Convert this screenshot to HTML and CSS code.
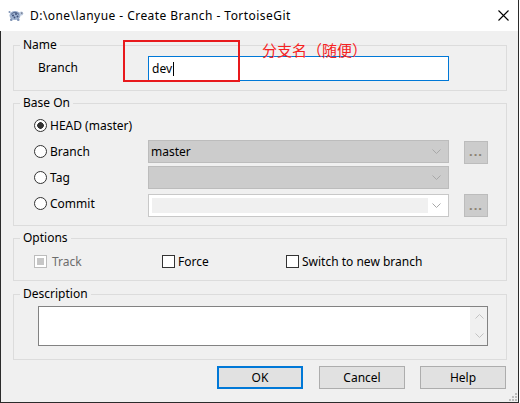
FILE: index.html
```html
<!DOCTYPE html>
<html lang="en">
<head>
<meta charset="utf-8">
<title>Create Branch - TortoiseGit</title>
<link rel="stylesheet" href="styles.css">
</head>
<body>
<div class="window">
  <div class="titlebar">
    <svg class="app-icon" width="16" height="14" viewBox="0 0 16 14">
      <ellipse cx="7" cy="7.5" rx="5.5" ry="4.5" fill="#9fb3d1"/>
      <path d="M3 6.5 Q7 2 11 6.5" fill="none" stroke="#55688e" stroke-width="1"/>
      <circle cx="5" cy="7.5" r="1" fill="#3f5078"/>
      <circle cx="8" cy="6" r="1" fill="#3f5078"/>
      <circle cx="9.5" cy="8.5" r="1" fill="#3f5078"/>
      <circle cx="6.5" cy="9.5" r="0.9" fill="#3f5078"/>
      <circle cx="13.3" cy="5.5" r="2" fill="#b9c7dc"/>
      <circle cx="13.8" cy="5" r="0.6" fill="#223"/>
      <rect x="2" y="10.5" width="2.5" height="2.5" rx="1" fill="#7f93b5"/>
      <rect x="9" y="10.5" width="2.5" height="2.5" rx="1" fill="#7f93b5"/>
      <rect x="0.5" y="3" width="2" height="2" rx="1" fill="#7f93b5"/>
    </svg>
    <span class="title">D:\one\lanyue - Create Branch - TortoiseGit</span>
    <svg class="close" width="11" height="11" viewBox="0 0 11 11">
      <path d="M0.5 0.5 L10.5 10.5 M10.5 0.5 L0.5 10.5" stroke="#000" stroke-width="1.1" fill="none"/>
    </svg>
  </div>

  <div class="client">
    <fieldset class="group g-name">
      <legend>Name</legend>
      <div class="name-row">
        <span class="lbl">Branch</span>
        <div class="edit focused"><span>dev</span><i class="caret"></i></div>
      </div>
    </fieldset>

    <fieldset class="group g-base">
      <legend>Base On</legend>
      <div class="base-grid">
        <span class="radio checked"><i class="rb"></i>HEAD (master)</span>
        <span></span>
        <span></span>

        <span class="radio"><i class="rb"></i>Branch</span>
        <div class="combo disabled"><span>master</span><svg class="chev" width="9" height="5" viewBox="0 0 9 5"><path d="M0.5 0.5 L4.5 4.5 L8.5 0.5" fill="none" stroke="#a8a8a8"/></svg></div>
        <span class="more m-first">...</span>

        <span class="radio"><i class="rb"></i>Tag</span>
        <div class="combo disabled"><span></span><svg class="chev" width="9" height="5" viewBox="0 0 9 5"><path d="M0.5 0.5 L4.5 4.5 L8.5 0.5" fill="none" stroke="#a8a8a8"/></svg></div>
        <span></span>

        <span class="radio r-last"><i class="rb"></i>Commit</span>
        <div class="combo white r-last-end"><span class="inner"></span><svg class="chev" width="9" height="5" viewBox="0 0 9 5"><path d="M0.5 0.5 L4.5 4.5 L8.5 0.5" fill="none" stroke="#a8a8a8"/></svg></div>
        <span class="more r-last-end">...</span>
      </div>
    </fieldset>

    <fieldset class="group g-options">
      <legend>Options</legend>
      <div class="opt-row">
        <span class="check disabled"><i class="cb"></i>Track</span>
        <span class="check"><i class="cb"></i>Force</span>
        <span class="check"><i class="cb"></i>Switch to new branch</span>
      </div>
    </fieldset>

    <fieldset class="group g-desc">
      <legend>Description</legend>
      <div class="desc-inner">
        <div class="memo">
          <div class="memo-text"></div>
          <div class="vscroll">
            <svg width="9" height="5" viewBox="0 0 9 5"><path d="M0.5 4.5 L4.5 0.5 L8.5 4.5" fill="none" stroke="#c2c2c2"/></svg>
            <svg width="9" height="5" viewBox="0 0 9 5"><path d="M0.5 0.5 L4.5 4.5 L8.5 0.5" fill="none" stroke="#c2c2c2"/></svg>
          </div>
        </div>
      </div>
    </fieldset>

    <div class="buttons">
      <span class="btn default">OK</span>
      <span class="btn">Cancel</span>
      <span class="btn">Help</span>
    </div>

    <svg class="grip" width="10" height="10" viewBox="0 0 10 10">
      <rect x="8" y="2" width="2" height="2" fill="#bdbdbd"/>
      <rect x="5" y="5" width="2" height="2" fill="#bdbdbd"/>
      <rect x="8" y="5" width="2" height="2" fill="#bdbdbd"/>
      <rect x="2" y="8" width="2" height="2" fill="#bdbdbd"/>
      <rect x="5" y="8" width="2" height="2" fill="#bdbdbd"/>
      <rect x="8" y="8" width="2" height="2" fill="#bdbdbd"/>
    </svg>
  </div>

  <div class="annot-box"></div>
  <div class="annot-text">分支名（随便）</div>
</div>
</body>
</html>
```

FILE: styles.css
```css
* { box-sizing: border-box; }

html, body {
  margin: 0;
  padding: 0;
  background: #ffffff;
}

body {
  font-family: "Noto Sans", "Noto Sans CJK SC", sans-serif;
  font-size: 12px;
  color: #000;
}

.window {
  position: relative;
  width: 519px;
  height: 403px;
  border-right: 1px solid #2b2b2b;
  display: flex;
  flex-direction: column;
}

.titlebar {
  height: 31px;
  background: #fff;
  display: flex;
  align-items: center;
  padding-left: 8px;
}

.app-icon {
  flex: none;
  margin-top: -1px;
}

.title {
  margin-left: 6px;
  font-size: 12px;
  line-height: 16px;
  letter-spacing: 0.45px;
  flex: 1;
}

.close {
  flex: none;
  margin-right: 9px;
  margin-top: -1px;
}

.client {
  position: relative;
  flex: 1;
  background: #f0f0f0;
  border-left: 1px solid #2b2b2b;
  border-bottom: 1px solid #2b2b2b;
  padding: 6px 11px 0 12px;
  display: flex;
  flex-direction: column;
}

.group {
  margin: 0;
  padding: 0;
  min-width: 0;
  width: 494px;
  border: 1px solid #dcdcdc;
}

.group legend {
  margin-left: 6px;
  padding: 0 3px;
  line-height: 16px;
  font-size: 12px;
}

.g-name { height: 54px; }
.g-base { height: 131px; margin-top: 4px; }
.g-options { height: 51px; margin-top: 4px; }
.g-desc { height: 74px; margin-top: 5px; }

/* Name */
.name-row {
  padding: 3px 0 0 24px;
  display: grid;
  grid-template-columns: 110px 301px;
  align-items: center;
}

.lbl {
  margin-top: -3px;
}

.edit {
  height: 25px;
  background: #fff;
  border: 1px solid #7a7a7a;
  display: flex;
  align-items: center;
  padding-left: 3px;
}

.edit.focused {
  border-color: #0078d7;
}

.caret {
  display: inline-block;
  width: 1px;
  height: 14px;
  background: #000;
  margin-left: 1px;
}

/* Base On */
.base-grid {
  padding: 3px 0 0 20px;
  display: grid;
  grid-template-columns: 114px 316px 24px;
  grid-template-rows: 23px 23px 23px 25px;
  column-gap: 0;
  row-gap: 3px;
  align-items: center;
}

.radio, .check {
  display: flex;
  align-items: center;
  white-space: nowrap;
}

.rb {
  width: 13px;
  height: 13px;
  border: 1px solid #333;
  border-radius: 50%;
  background: #fff;
  margin-right: 3px;
  flex: none;
}

.radio.checked .rb {
  background: radial-gradient(circle, #333 0 3px, #fff 3.6px);
}

.r-last { margin-top: -2px; }
.r-last-end { align-self: end; }

.combo {
  width: 301px;
  height: 23px;
  border: 1px solid #bcbcbc;
  display: flex;
  align-items: center;
  justify-content: space-between;
  padding: 0 7px 0 2px;
}

.combo.disabled {
  background: #cccccc;
}

.combo.white {
  background: #fff;
  border-color: #c8c8c8;
  padding: 3px 7px 3px 3px;
  align-items: stretch;
}

.combo.white .chev {
  align-self: center;
}

.combo .inner {
  width: 276px;
  background: #f0f0f0;
}

.more {
  height: 23px;
  border: 1px solid #bcbcbc;
  background: #cccccc;
  color: #8a8272;
  display: flex;
  align-items: center;
  justify-content: center;
  letter-spacing: 1px;
  font-size: 13px;
  font-weight: bold;
  padding-bottom: 2px;
}

.m-first { margin-top: 1px; }

/* Options */
.opt-row {
  padding: 7px 0 0 20px;
  height: 24px;
  display: grid;
  grid-template-columns: 128px 124px auto;
  align-items: center;
}

.cb {
  width: 13px;
  height: 13px;
  border: 1px solid #333;
  background: #fff;
  margin-right: 3px;
  flex: none;
}

.check.disabled {
  color: #6d6d6d;
}

.check.disabled .cb {
  border-color: #bcbcbc;
  background: #c6c6c6;
  box-shadow: inset 0 0 0 2px #fff;
  margin-right: 5px;
}

/* Description */
.desc-inner {
  padding: 4px 0 0 24px;
}

.memo {
  width: 450px;
  height: 40px;
  border: 1px solid #828282;
  background: #fff;
  display: flex;
}

.memo-text { flex: 1; }

.vscroll {
  width: 17px;
  background: #f0f0f0;
  display: flex;
  flex-direction: column;
  align-items: center;
  justify-content: space-between;
  padding: 7px 0 7px 1px;
}

/* Buttons */
.buttons {
  margin-top: 6px;
  display: flex;
  justify-content: flex-end;
  gap: 15px;
  width: 493px;
}

.btn {
  width: 86px;
  height: 23px;
  background: #e1e1e1;
  border: 1px solid #adadad;
  display: flex;
  align-items: center;
  justify-content: center;
  font-size: 12px;
}

.btn.default {
  border: 2px solid #0078d7;
  margin-right: 1px;
}

.grip {
  position: absolute;
  right: 1px;
  bottom: 1px;
}

/* Red annotation overlay */
.annot-box {
  position: absolute;
  left: 123px;
  top: 40px;
  width: 117px;
  height: 42px;
  border: 2px solid #e8191c;
}

.annot-text {
  position: absolute;
  left: 262px;
  top: 41px;
  font-family: "Noto Sans CJK SC", sans-serif;
  font-size: 15px;
  line-height: 18px;
  color: #f52222;
}
```
